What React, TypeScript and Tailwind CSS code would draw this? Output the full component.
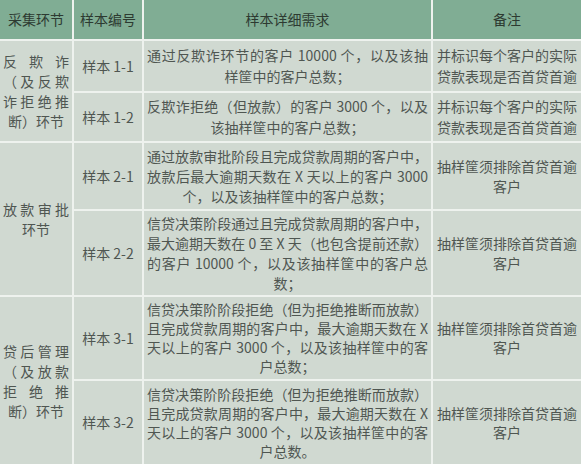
const FONT = '"Noto Sans CJK SC", "Noto Sans", sans-serif';

type Row = {
  stage?: { lines: string[]; span: number };
  id: string;
  detail: string[];
  note: string[];
  leading: string;
};

const ROWS: Row[] = [
  {
    stage: { lines: ["反欺诈", "（及反欺", "诈拒绝推", "断）环节"], span: 2 },
    id: "样本 1-1",
    detail: ["通过反欺诈环节的客户 10000 个，以及该抽", "样筐中的客户总数；"],
    note: ["并标识每个客户的实际", "贷款表现是否首贷首逾"],
    leading: "leading-[21px]",
  },
  {
    id: "样本 1-2",
    detail: ["反欺诈拒绝（但放款）的客户 3000 个，以及", "该抽样筐中的客户总数；"],
    note: ["并标识每个客户的实际", "贷款表现是否首贷首逾"],
    leading: "leading-[21px]",
  },
  {
    stage: { lines: ["放款审批", "环节"], span: 2 },
    id: "样本 2-1",
    detail: [
      "通过放款审批阶段且完成贷款周期的客户中，",
      "放款后最大逾期天数在 X 天以上的客户 3000",
      "个，以及该抽样筐中的客户总数；",
    ],
    note: ["抽样筐须排除首贷首逾", "客户"],
    leading: "leading-[20px]",
  },
  {
    id: "样本 2-2",
    detail: [
      "信贷决策阶段通过且完成贷款周期的客户中，",
      "最大逾期天数在 0 至 X 天（也包含提前还款）",
      "的客户 10000 个，以及该抽样筐中的客户总",
      "数；",
    ],
    note: ["抽样筐须排除首贷首逾", "客户"],
    leading: "leading-[20px]",
  },
  {
    stage: { lines: ["贷后管理", "（及放款", "拒绝推", "断）环节"], span: 2 },
    id: "样本 3-1",
    detail: [
      "信贷决策阶阶段拒绝（但为拒绝推断而放款）",
      "且完成贷款周期的客户中，最大逾期天数在 X",
      "天以上的客户 3000 个，以及该抽样筐中的客",
      "户总数；",
    ],
    note: ["抽样筐须排除首贷首逾", "客户"],
    leading: "leading-[19px]",
  },
  {
    id: "样本 3-2",
    detail: [
      "信贷决策阶阶段拒绝（但为拒绝推断而放款）",
      "且完成贷款周期的客户中，最大逾期天数在 X",
      "天以上的客户 3000 个，以及该抽样筐中的客",
      "户总数。",
    ],
    note: ["抽样筐须排除首贷首逾", "客户"],
    leading: "leading-[19px]",
  },
];

function Justified({ lines }: { lines: string[] }) {
  return (
    <div className="w-full">
      {lines.map((l, i) =>
        i === lines.length - 1 && lines.length > 1 ? (
          <div key={i} className="text-center">
            {l}
          </div>
        ) : (
          <div key={i} className="text-justify [text-align-last:justify]">
            {l}
          </div>
        )
      )}
    </div>
  );
}

export default function App() {
  const cell = "flex items-center bg-[#d0d9d1] text-[14px] text-[#4f5651]";
  const head = "flex items-center justify-center bg-[#80ad94] text-[14px] text-[#2d3a31]";

  return (
    <div
      className="w-[581px] h-[464px] overflow-hidden bg-[#eef2ee]"
      style={{ fontFamily: FONT }}
    >
      <div className="grid h-full grid-cols-[72px_68px_287px_148px] grid-rows-[39px_50px_48px_66px_84px_82px_83px] gap-[2px]">
        <div className={head}>采集环节</div>
        <div className={head}>样本编号</div>
        <div className={head}>样本详细需求</div>
        <div className={head}>备注</div>

        {ROWS.map((r) => (
          <div key={r.id} className="contents">
            {r.stage && (
              <div className={`${cell} row-span-2 px-[3px] leading-[20px]`}>
                <Justified lines={r.stage.lines} />
              </div>
            )}
            <div className={`${cell} justify-center`}>{r.id}</div>
            <div className={`${cell} px-[3px] ${r.leading}`}>
              <Justified lines={r.detail} />
            </div>
            <div className={`${cell} justify-center text-center px-[2px] ${r.leading}`}>
              <div>
                {r.note.map((n, i) => (
                  <div key={i}>{n}</div>
                ))}
              </div>
            </div>
          </div>
        ))}
      </div>
    </div>
  );
}
